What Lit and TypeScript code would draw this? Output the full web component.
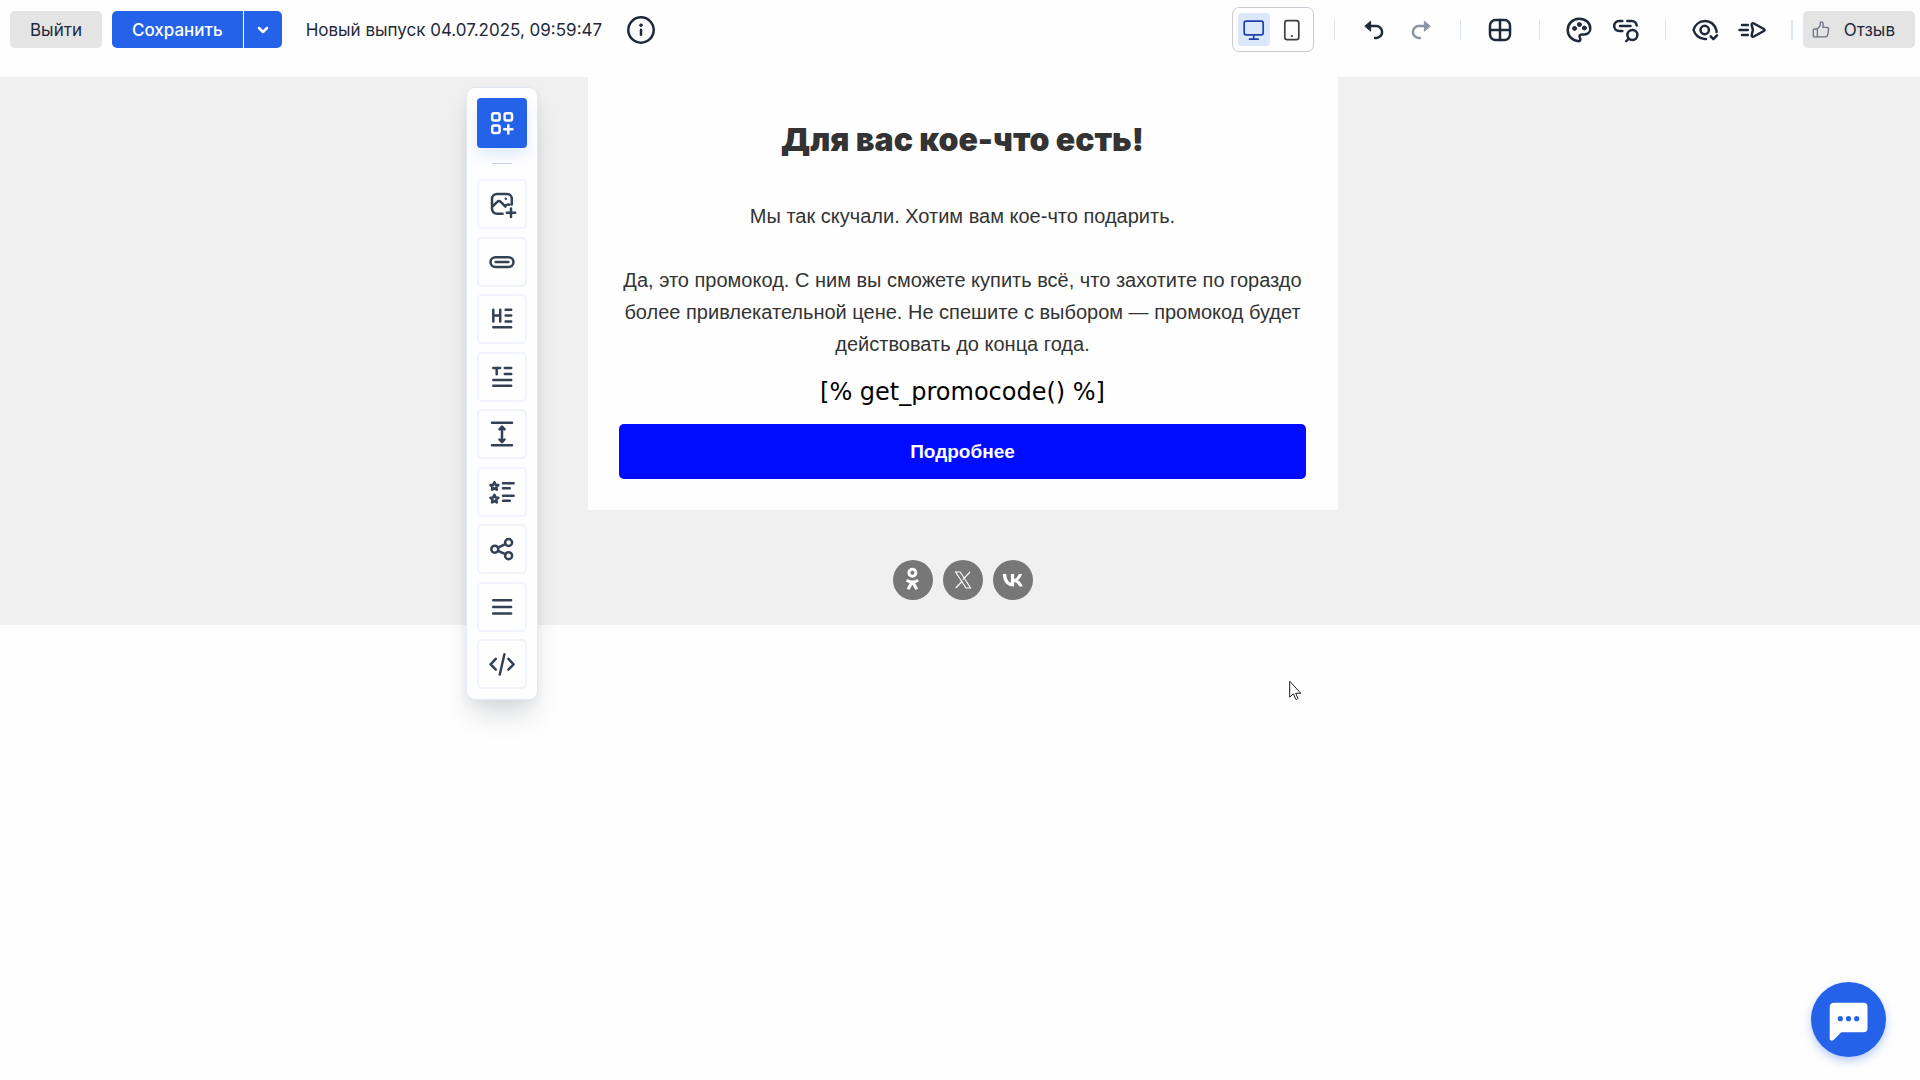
import { LitElement, html, css, svg, SVGTemplateResult, TemplateResult } from "lit";
import { customElement } from "lit/decorators.js";

const icon = (name: string, size = 30): TemplateResult => html`
  <svg class="icon" width=${size} height=${size} viewBox="0 0 ${size} ${size}" aria-hidden="true">${shapes[name]}</svg>
`;

/* Stroked outlines, drawn on a 30 unit grid unless noted. */
const shapes: Record<string, SVGTemplateResult> = {
  info: svg`<circle cx="15" cy="15" r="12.7"/><path d="M15 14.8v5"/><circle class="solid" cx="15" cy="10.2" r="1.3"/>`,
  desktop: svg`<rect x="5.2" y="6.2" width="19" height="13.6" rx="2"/><path d="M14.7 20v4M10.5 24.2h8.6"/>`,
  phone: svg`<rect x="7.8" y="5.6" width="14" height="19" rx="2.4"/><circle class="solid" cx="14.8" cy="21" r=".6"/>`,
  undo: svg`<path d="M11 11h6.3a5.8 6 0 0 1 0 12H16"/><path class="solid" d="M6 11l5.6-4.8v9.6z"/>`,
  redo: svg`<path d="M19 11h-6.3a5.8 6 0 0 0 0 12H14"/><path class="solid" d="M24 11l-5.6-4.8v9.6z"/>`,
  grid: svg`<rect x="5" y="5" width="20" height="20" rx="5.5"/><path d="M15 5v20M5 15h20"/>`,
  palette: svg`<path d="M15 26.3C8 25.6 3.7 20.9 3.7 15 3.7 8.7 8.7 3.7 15.2 3.7S26.3 8 26.3 13.5c0 3.8-2.8 5.9-6 5.9h-2.6c-2 0-2.7 1.5-1.9 3 .8 1.4 1 3.5-.8 3.9z"/><circle class="solid" cx="10.6" cy="13.4" r="2"/><circle class="solid" cx="15.4" cy="9.6" r="2"/><circle class="solid" cx="20.4" cy="13" r="2"/>`,
  linkSearch: svg`<path d="M11.3 6H8.2a5 5 0 0 0 0 10h3.1M16.3 6h4.2a5 5 0 0 1 5.2 4.5M9 11h10.5"/><circle cx="21.4" cy="20" r="5"/><path d="M17.8 23.6L15.2 26.2"/>`,
  preview: svg`<path d="M16 23.9h-1.3C9.2 23.9 5 19.8 3.5 15 5 10 9.2 6.1 14.9 6.1S24.8 10 26.5 15.5v1.5"/><circle cx="14.7" cy="15" r="4.2"/><path d="M20.7 21.4l2.7 2.8 3.6-3.9"/>`,
  send: svg`<path d="M5 10h5.8M2.5 15h8.3M5 20h5.8"/><path d="M14.7 10c-.3-1.4.8-2.3 2.2-1.5l10 5.5c.9.5.9 1.5 0 2l-10 5.5c-1.4.8-2.5-.1-2.2-1.5l1.2-5z"/>`,
  blocks: svg`<rect x="5.2" y="5.2" width="7.4" height="7.4" rx="1.8"/><rect x="17.6" y="5.2" width="7.4" height="7.4" rx="1.8"/><rect x="5.2" y="17.6" width="7.4" height="7.4" rx="1.8"/><path d="M21.3 17.2v8.2M17.2 21.3h8.2"/>`,
  image: svg`<path d="M24.8 15.5V10a5 5 0 0 0-5-5H10a5 5 0 0 0-5 5v9.8a5 5 0 0 0 5 5h5.6M5.5 17.5l4.7-4.6c1.2-1.2 2.4-1.2 3.6 0l4.6 4.7M18.5 16.8c1.2-1.3 2.4-1.6 3.8-1.1"/><circle class="solid" cx="18.8" cy="9.8" r=".8"/><path d="M24 19.5v8.4M19.8 23.7h8.4"/>`,
  button: svg`<rect x="3.5" y="10.2" width="23" height="9.8" rx="4.9"/><path d="M8.6 15h12.8"/>`,
  heading: svg`<path d="M6.3 5.8v11.7M13.2 5.8v11.7M6.3 11.6h6.9M18.6 5.8h5.6M18.6 11.6h5.6M18.6 17.5h5.6M6.3 23.2h17.9"/>`,
  text: svg`<path d="M6.3 6h6.8M9.7 6v6.2M17.8 6h6.4M17.8 12h6.4M6.3 18h17.9M6.3 23.7h17.9"/>`,
  spacer: svg`<path d="M5 3.7h20M5 26.3h20M15 8v14.5M12.5 10.3L15 7.6l2.5 2.7M12.5 20.5l2.5 2.7 2.5-2.7"/>`,
  rating: svg`<path d="M7.4 5.2l1.2 2.5 2.7.4-2 1.9.5 2.7-2.4-1.3L5 12.7l.5-2.7-2-1.9 2.7-.4zM7.4 17.9l1.2 2.5 2.7.4-2 1.9.5 2.7L7.4 24.1 5 25.4l.5-2.7-2-1.9 2.7-.4zM16 6.3h10.6M16 11.3h6.8M16 18.7h10.6M16 23.7h6.8"/>`,
  share: svg`<circle cx="7.8" cy="15.2" r="3.5"/><circle cx="21.6" cy="8.5" r="3.5"/><circle cx="21.6" cy="21.7" r="3.5"/><path d="M11 13.7l7.4-3.6M11 16.8l7.4 3.4"/>`,
  menu: svg`<path d="M6.2 8.3h17.9M6.2 15h17.9M6.2 21.5h17.9"/>`,
  code: svg`<path d="M8.8 9.8L3.6 15.3l5.2 5.3M21.4 9.8l5.2 5.5-5.2 5.3M17.4 5.2l-4.6 20.3"/>`,
  /* 16 unit grid */
  chevron: svg`<path d="M4 6l4 4 4-4"/>`,
  /* 18 unit grid */
  thumb: svg`<path d="M5.4 8h-3C1.6 8 1.3 8.5 1.3 9v5.9c0 .6.4 1 1 1h3.1zM5.4 8l2.9-3.6V2.2c0-.8.5-1.2 1.2-1.2 1.3 0 1.8 1.2 1.7 2.6l-.4 2.8h4c1.4 0 2 .9 1.8 2l-.9 5.5c-.2 1.3-1 2-2.2 2H5.4"/>`,
};

const socials = [
  {
    label: "Одноклассники",
    art: svg`<g class="line"><circle cx="19.4" cy="12.8" r="3.5"/><path d="M13.6 20.2c3.6 2.3 8 2.3 11.6 0M19.4 21.5l-4.4 7.7M19.4 21.5l4.4 7.7"/></g>`,
  },
  {
    label: "X",
    art: svg`<g class="hair"><path d="M12.6 12h4.6L27.6 28H23zM27 12l-7.3 7.7M12.8 28l6.6-7"/></g>`,
  },
  {
    label: "ВКонтакте",
    art: svg`<path class="fill" d="M20.9 26.6c-6.8 0-10.9-4.7-11.1-12.5h3.5c.1 5.7 2.6 8.1 4.6 8.6v-8.6h3.2V19c2-.2 4-2.4 4.7-4.9H29c-.5 3-2.7 5.2-4.3 6.1 1.6.7 4.1 2.7 5.1 6.4h-3.5c-.8-2.4-2.6-4.2-5.2-4.5v4.5z"/>`,
  },
];

const tools: [string, string][] = [
  ["image", "Изображение"],
  ["button", "Кнопка"],
  ["heading", "Заголовок"],
  ["text", "Текст"],
  ["spacer", "Отступ"],
  ["rating", "Список"],
  ["share", "Соцсети"],
  ["menu", "Меню"],
  ["code", "HTML"],
];

const shared = css`
  * { box-sizing: border-box; }
  button {
    margin: 0;
    padding: 0;
    border: 0;
    background: none;
    color: inherit;
    font: inherit;
    display: flex;
    align-items: center;
    justify-content: center;
    cursor: pointer;
  }
  .icon {
    display: block;
    flex: none;
    fill: none;
    stroke: currentColor;
    stroke-width: 2.5;
    stroke-linecap: round;
    stroke-linejoin: round;
    overflow: visible;
  }
  .solid { fill: currentColor; stroke-width: 1; }
`;

@customElement("editor-header")
export class EditorHeader extends LitElement {
  static styles = [shared, css`
    :host { display: block; }
    .bar {
      display: flex;
      align-items: center;
      justify-content: space-between;
      padding: 7px 5px 25px 10px;
      color: #1e293b;
      font: 17px/24px Inter, sans-serif;
    }
    .side { display: flex; align-items: center; }
    .exit, .feedback, .save, .more { height: 37px; }
    .exit { padding: 0 20px; background: #e4e4e4; border-radius: 5px; }
    .split { display: flex; gap: 1px; margin: 0 24px 0 10px; color: #fefefe; }
    .save { padding: 0 20px; background: #2462ea; border-radius: 5px 0 0 5px; font-weight: 500; }
    .more { width: 38px; background: #2462ea; border-radius: 0 5px 5px 0; }
    .info { margin-left: 24px; }
    .devices {
      display: flex;
      gap: 6px;
      padding: 5px;
      margin-right: 20px;
      border: 1px solid #cbcbd6;
      border-radius: 7px;
    }
    .device { width: 32px; height: 33px; border-radius: 4px; color: #3f3f46; }
    .device .icon { stroke-width: 1.7; }
    .device.active { background: #dbe8fc; color: #1e40af; }
    .group {
      display: flex;
      align-items: center;
      gap: 17px;
      height: 20px;
      padding: 0 24px;
      border-left: 1px solid #dde5f2;
    }
    .group .off { color: #8a94a5; }
    .rule { width: 2px; height: 20px; margin-right: 10px; background: #dde5f2; }
    .feedback { gap: 14px; padding: 0 20px 0 9px; background: #e4e4e4; border-radius: 5px; }
    .feedback .icon { stroke-width: 1.3; color: #6b7280; }
  `];

  render() {
    const action = (name: string, label: string, off = false) =>
      html`<button class=${off ? "off" : "on"} aria-label=${label} ?disabled=${off}>${icon(name)}</button>`;
    return html`
      <header class="bar">
        <div class="side">
          <button class="exit">Выйти</button>
          <div class="split">
            <button class="save">Сохранить</button>
            <button class="more" aria-label="Ещё">${icon("chevron", 16)}</button>
          </div>
          <span>Новый выпуск 04.07.2025, 09:59:47</span>
          <button class="info" aria-label="Информация">${icon("info")}</button>
        </div>
        <div class="side">
          <div class="devices">
            <button class="device active" aria-label="Компьютер">${icon("desktop")}</button>
            <button class="device" aria-label="Телефон">${icon("phone")}</button>
          </div>
          <div class="group">${action("undo", "Отменить")}${action("redo", "Повторить", true)}</div>
          <div class="group">${action("grid", "Сетка")}</div>
          <div class="group">${action("palette", "Оформление")}${action("linkSearch", "Проверка ссылок")}</div>
          <div class="group">${action("preview", "Просмотр")}${action("send", "Отправить тест")}</div>
          <div class="rule"></div>
          <button class="feedback">${icon("thumb", 18)}Отзыв</button>
        </div>
      </header>
    `;
  }
}

@customElement("block-palette")
export class BlockPalette extends LitElement {
  static styles = [shared, css`
    :host { display: block; }
    .panel {
      display: flex;
      flex-direction: column;
      align-items: center;
      padding: 10px;
      border: 1px solid #e2e8f5;
      border-radius: 9px;
      background: #fefefe;
      color: #334155;
      box-shadow: 0 20px 28px -6px rgb(30 41 59 / 16%), 0 4px 12px rgb(30 41 59 / 5%);
    }
    .add {
      width: 50px;
      height: 50px;
      border-radius: 4px;
      background: #2462ea;
      color: #fefefe;
      box-shadow: 0 8px 14px rgb(36 98 234 / 12%);
    }
    .split { width: 20px; height: 1px; margin: 15px 0; background: #cbd0e0; }
    .list { display: flex; flex-direction: column; justify-content: space-between; min-height: 510px; }
    .tool { width: 50px; height: 50px; border: 2px solid #f1f5fb; border-radius: 5px; }
  `];

  render() {
    return html`
      <nav class="panel">
        <button class="add" aria-label="Блоки">${icon("blocks")}</button>
        <div class="split"></div>
        <div class="list">
          ${tools.map(([name, label]) => html`<button class="tool" aria-label=${label}>${icon(name)}</button>`)}
        </div>
      </nav>
    `;
  }
}

@customElement("email-preview")
export class EmailPreview extends LitElement {
  static styles = [shared, css`
    :host { display: block; }
    .letter {
      padding: 39px 32px 31px 31px;
      background: #fefefe;
      color: #333;
      text-align: center;
      font: 20px/32px "Liberation Sans", Arial, sans-serif;
    }
    h1 { margin: 0 0 36px; font: 900 32px/48px Inter, sans-serif; }
    p { margin: 0 0 32px; }
    .code {
      margin: -16px 0 16px;
      color: #000;
      font: 24px/32px "DejaVu Sans", sans-serif;
    }
    .cta {
      display: block;
      padding: 12px 16px 11px;
      border-radius: 5px;
      background: #000cff;
      color: #fefefe;
      font-size: 19px;
      font-weight: 700;
      text-decoration: none;
    }
    .socials { display: flex; justify-content: center; gap: 10px; padding: 50px 0 25px; }
    .social { display: block; width: 40px; height: 40px; border-radius: 50%; background: #777; }
    .social svg { display: block; }
    .line { fill: none; stroke: #fefefe; stroke-width: 3; stroke-linecap: butt; }
    .hair { fill: none; stroke: #fefefe; stroke-width: 1.1; }
    .fill { fill: #fefefe; }
  `];

  render() {
    return html`
      <article class="letter">
        <h1>Для вас кое-что есть!</h1>
        <p>Мы так скучали. Хотим вам кое-что подарить.</p>
        <p>Да, это промокод. С ним вы сможете купить всё, что захотите по гораздо более привлекательной цене. Не спешите с выбором — промокод будет действовать до конца года.</p>
        <div class="code">[% get_promocode() %]</div>
        <a class="cta" href="#">Подробнее</a>
      </article>
      <div class="socials">
        ${socials.map(
          (s) => html`<a class="social" href="#" aria-label=${s.label}><svg width="40" height="40" viewBox="0 0 40 40">${s.art}</svg></a>`,
        )}
      </div>
    `;
  }
}

@customElement("app-root")
export class AppRoot extends LitElement {
  static styles = [shared, css`
    :host { display: block; position: relative; min-height: 100vh; background: #fefefe; }
    .canvas { display: flex; justify-content: center; padding-left: 6px; background: #f0f0f0; }
    .stage { position: relative; width: 100%; max-width: 750px; }
    .palette { position: absolute; top: 10px; right: calc(100% + 50px); }
    .chat {
      position: absolute;
      right: 34px;
      bottom: 23px;
      width: 75px;
      height: 75px;
      border-radius: 50%;
      background: #2462ea;
      box-shadow: 0 4px 10px rgb(36 98 234 / 32%);
    }
    .bubble { fill: #fefefe; }
    .dots { fill: #2462ea; }
    .pointer { position: absolute; left: 1289px; top: 680px; fill: #fefefe; stroke: #1c1c28; }
  `];

  render() {
    return html`
      <editor-header></editor-header>
      <main class="canvas">
        <div class="stage">
          <block-palette class="palette"></block-palette>
          <email-preview></email-preview>
        </div>
      </main>
      <svg class="pointer" width="14" height="21" viewBox="0 0 14 21" aria-hidden="true">
        <path d="M.7 1.2v16l3.7-3.4 2.3 5.3c1 .6 2 .2 2.2-.7l-2.2-5.1h5.1z"/>
      </svg>
      <button class="chat" aria-label="Чат">
        <svg width="75" height="75" viewBox="0 0 75 75" aria-hidden="true">
          <path class="bubble" d="M23 20.7h29.5a4 4 0 0 1 4 4v21.6a4 4 0 0 1-4 4H30.3l-7.7 7.6c-1.5 1.5-3.9.8-3.9-1.3V24.7a4 4 0 0 1 4.3-4z"/>
          <g class="dots"><circle cx="29.3" cy="36.7" r="2.6"/><circle cx="37.5" cy="36.7" r="2.6"/><circle cx="45.7" cy="36.7" r="2.6"/></g>
        </svg>
      </button>
    `;
  }
}
